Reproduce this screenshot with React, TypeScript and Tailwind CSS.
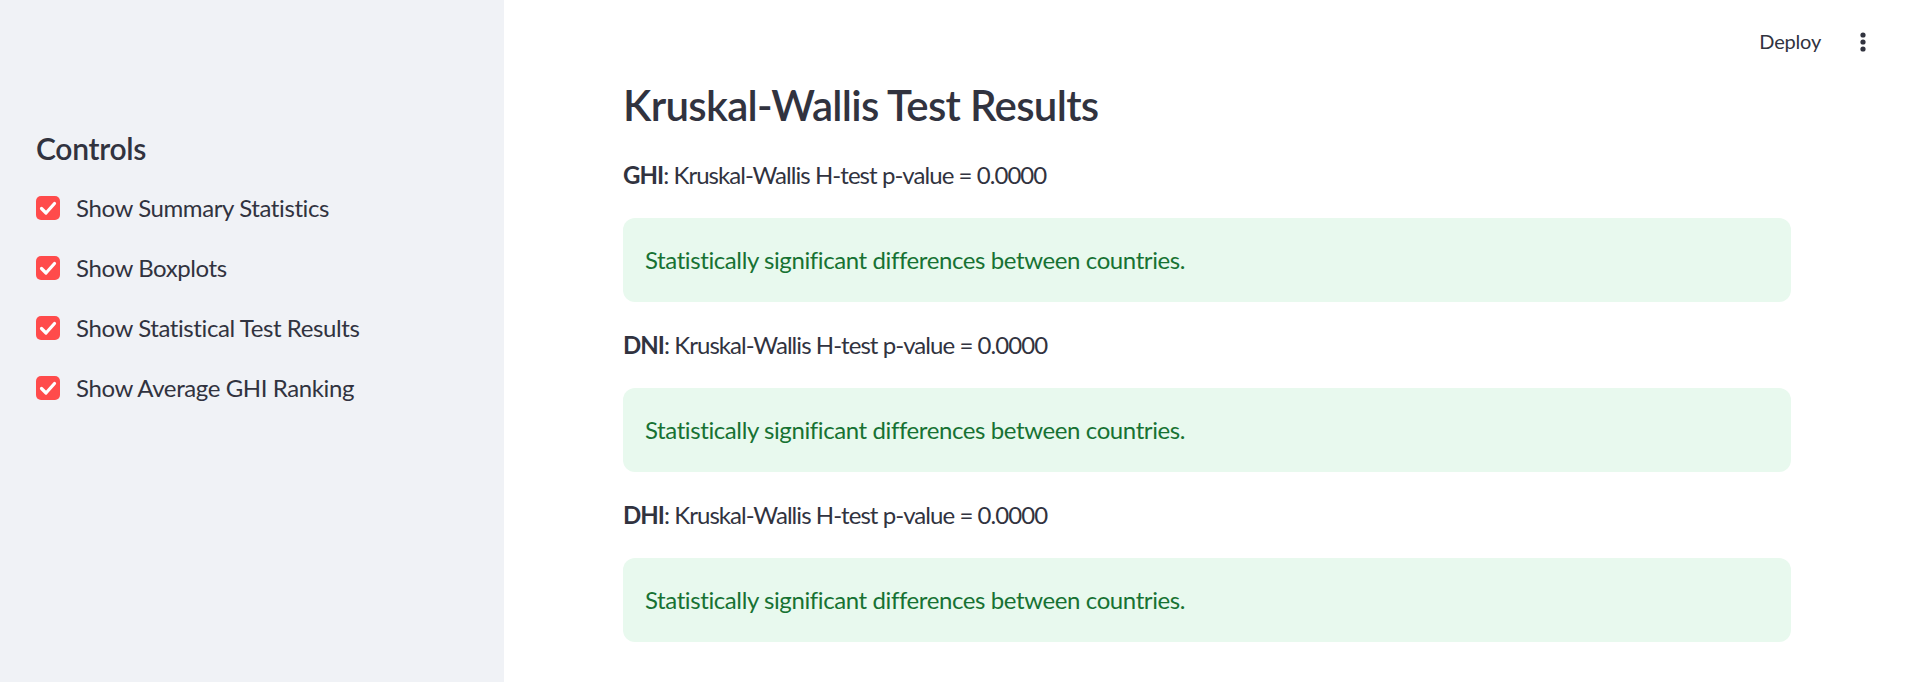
import React from 'react';

const FONT = "font-['Lato','Noto_Sans',sans-serif]";

const CONTROLS = [
  'Show Summary Statistics',
  'Show Boxplots',
  'Show Statistical Test Results',
  'Show Average GHI Ranking',
];

const RESULTS = ['GHI', 'DNI', 'DHI'];

function CheckBox() {
  return (
    <span className="flex h-[24px] w-[24px] shrink-0 items-center justify-center rounded-[5px] bg-[#ff4b4b]">
      <svg viewBox="0 0 24 24" className="h-[24px] w-[24px]" fill="none">
        <path d="M5.5 12.5l4.5 4.5 8.5-9.5" stroke="#fff" strokeWidth="3.2" strokeLinecap="round" strokeLinejoin="round" />
      </svg>
    </span>
  );
}

export default function App() {
  return (
    <div className={`flex h-[682px] w-full overflow-hidden bg-white text-[#31333f] ${FONT}`}>
      {/* Sidebar */}
      <aside className="w-[504px] shrink-0 bg-[#f0f2f6] px-[36px] pt-[130px]">
        <h2 className="text-[30px] leading-[36px] font-semibold tracking-[-0.3px]">Controls</h2>
        <div className="mt-[24px] flex flex-col gap-[24px]">
          {CONTROLS.map((label) => (
            <label key={label} className="flex h-[36px] items-center gap-[16px] text-[24px] leading-[36px] tracking-[-0.4px]">
              <CheckBox />
              <span>{label}</span>
            </label>
          ))}
        </div>
      </aside>

      {/* Main */}
      <main className="flex-1">
        <header className="flex h-[80px] items-start justify-end gap-[39px] pr-[52px] pt-[23px]">
          <button className="h-[36px] text-[20px] leading-[36px] tracking-[-0.2px] text-[#31333f]">Deploy</button>
          <svg viewBox="0 0 6 20" className="mt-[9px] h-[20px] w-[6px]" fill="#31333f">
            <circle cx="3" cy="3" r="2.6" />
            <circle cx="3" cy="10" r="2.6" />
            <circle cx="3" cy="17" r="2.6" />
          </svg>
        </header>

        <section className="pl-[119px] pr-[127px]">
          <h3 className="text-[42px] leading-[50px] font-semibold tracking-[-0.7px]">Kruskal-Wallis Test Results</h3>
          <div className="mt-[26px] flex flex-col gap-[24px]">
            {RESULTS.map((key) => (
              <div key={key} className="flex flex-col gap-[24px]">
                <p className="text-[24px] leading-[38px] tracking-[-0.95px]">
                  <span className="font-bold">{key}</span>: Kruskal-Wallis H-test p-value = 0.0000
                </p>
                <div className="h-[84px] rounded-[12px] bg-[#e8f9ee] px-[22px] py-[24px] text-[24px] leading-[36px] tracking-[-0.4px] text-[#177233]">
                  Statistically significant differences between countries.
                </div>
              </div>
            ))}
          </div>
        </section>
      </main>
    </div>
  );
}
